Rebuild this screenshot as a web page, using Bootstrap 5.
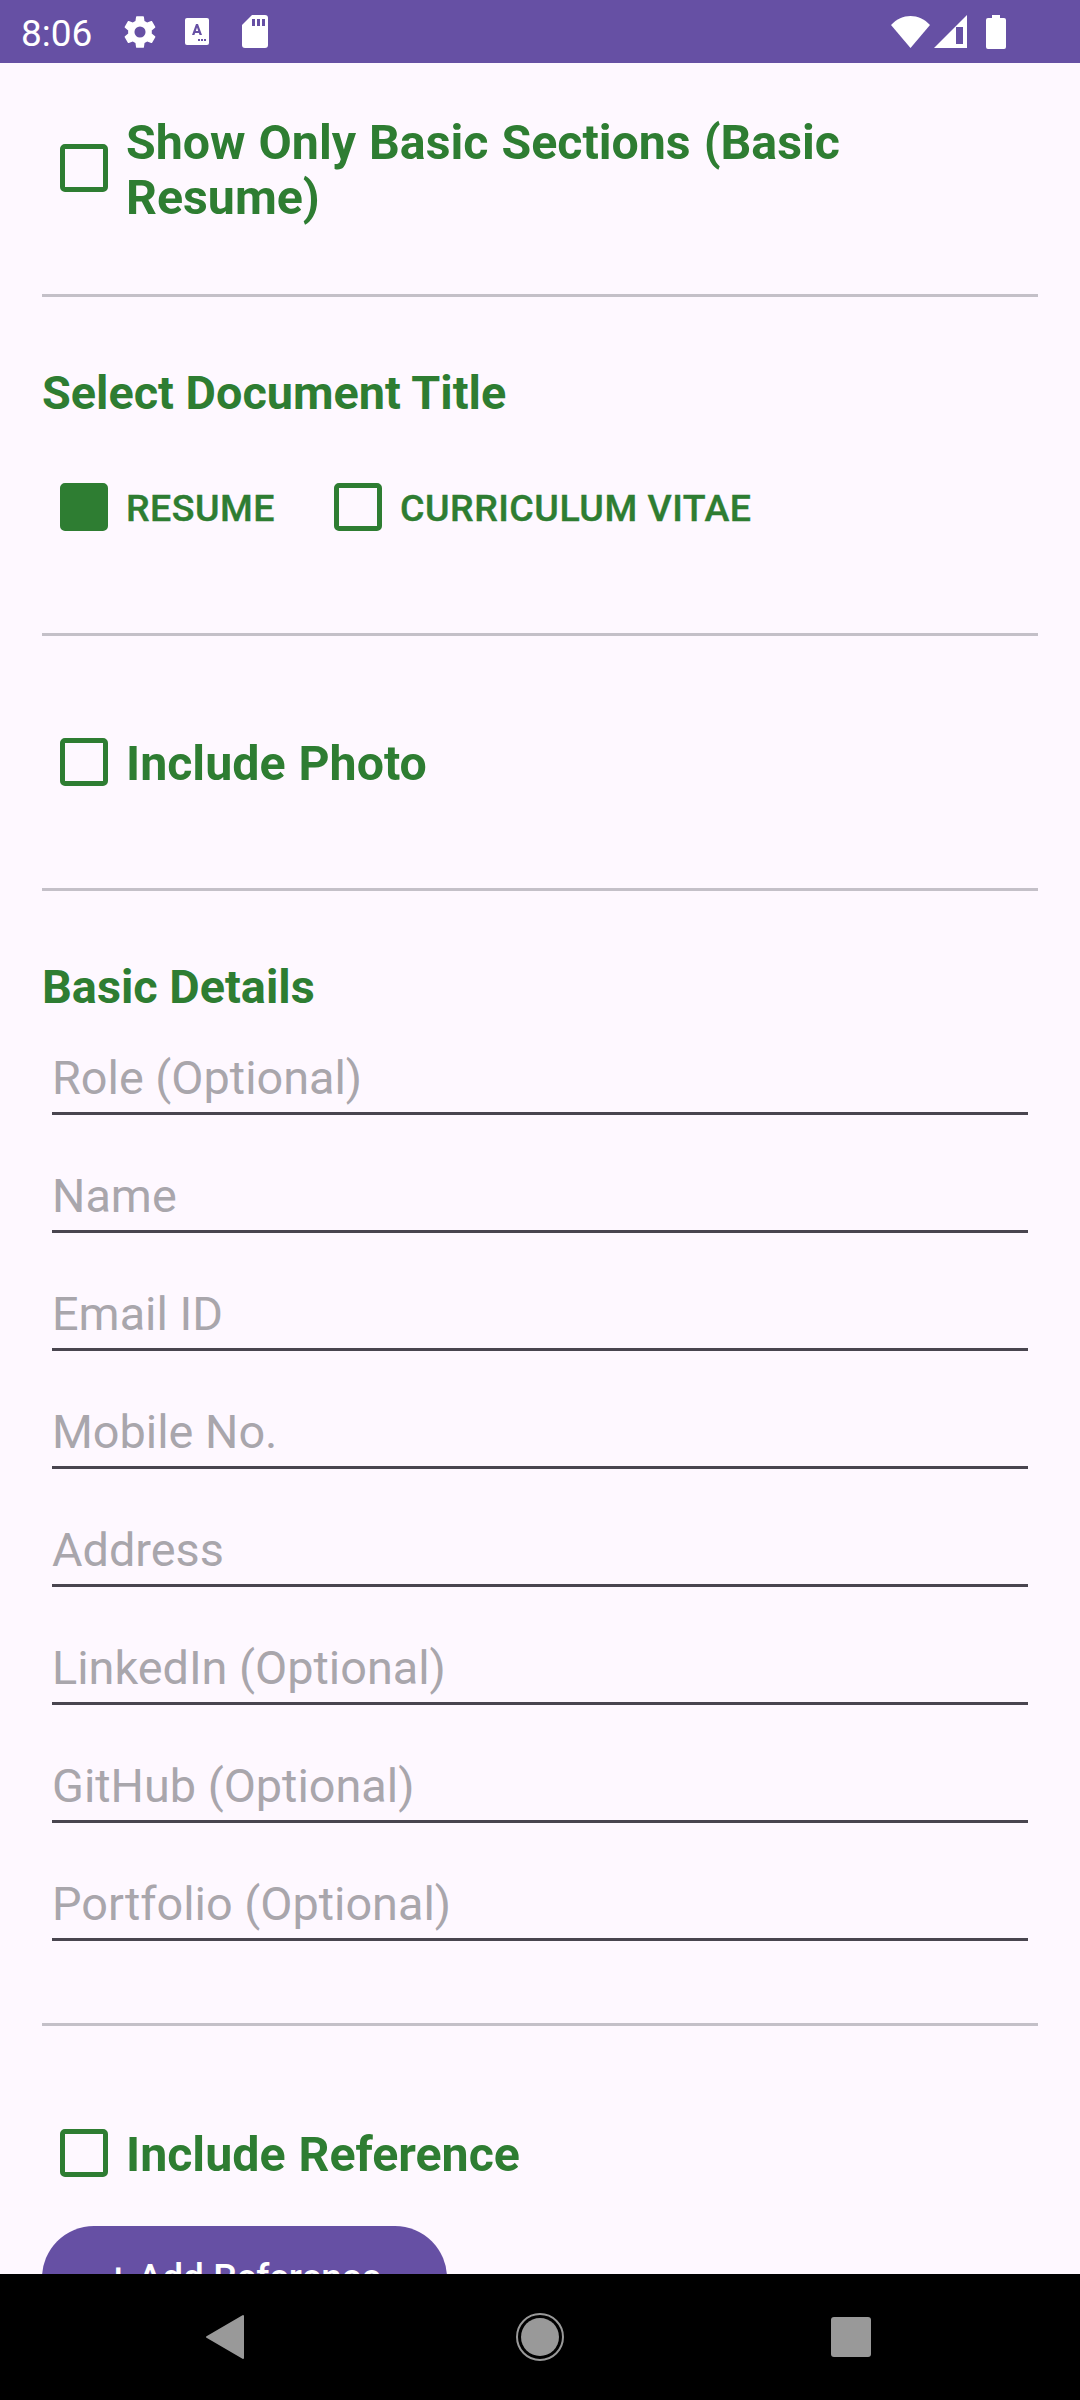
<!DOCTYPE html>
<html lang="en">
<head>
    <meta charset="UTF-8">
    <meta name="viewport" content="width=device-width, initial-scale=1.0">
    <title>Resume Builder</title>
    <link href="https://cdn.jsdelivr.net/npm/bootstrap@5.3.0/dist/css/bootstrap.min.css" rel="stylesheet">
    <style>
        html, body {
            height: 2400px;
            overflow: hidden;
        }
        body {
            font-family: 'Roboto', sans-serif;
            background-color: #fef8ff;
            color: #2e7d32;
        }
        .status-bar {
            height: 63px;
            background-color: #6650a4;
            padding: 0 74px 0 21px;
            color: #fff;
        }
        .status-time {
            font-size: 37px;
            line-height: 1;
            width: 103px;
            margin-top: 4px;
        }
        .sheet {
            height: 2211px;
            overflow: hidden;
            padding: 50px 42px 0;
        }
        .rule {
            height: 3px;
            margin: 0;
            border: 0;
            opacity: 1;
            background-color: #c4c0c8;
        }
        .pick {
            display: flex;
            align-items: center;
            margin: 0;
            padding: 0;
            min-height: 48px;
            font-weight: 700;
            line-height: 48px;
        }
        .pick .form-check-input {
            float: none;
            flex: none;
            width: 48px;
            height: 48px;
            margin: 0 18px 0 18px;
            background-color: transparent;
            border: 5px solid #2e7d32;
            border-radius: 5px;
            box-shadow: none;
        }
        .pick .form-check-input:checked {
            background-color: #2e7d32;
            background-image: none;
        }
        .pick-big {
            font-size: 48.3px;
            word-spacing: 1px;
            padding-right: 40px;
        }
        .pick-big span {
            position: relative;
            top: 2px;
        }
        .pick-wrap {
            line-height: 55px;
        }
        .pick-small {
            font-size: 37.5px;
            font-weight: 500;
            letter-spacing: 0.5px;
            -webkit-text-stroke: 0.4px #2e7d32;
        }
        .pick-small span {
            position: relative;
            top: 1px;
        }
        .section-head {
            font-size: 46.8px;
            font-weight: 700;
            line-height: 55px;
            margin: 0;
        }
        .field-list {
            padding: 0 10px;
        }
        .field-input {
            display: block;
            height: 70px;
            padding: 0;
            margin-top: 48px;
            background: transparent;
            border: 0;
            border-bottom: 3px solid #49454f;
            border-radius: 0;
            font-size: 46.8px;
            box-shadow: none;
        }
        .field-input::placeholder {
            color: #a9a6ac;
            opacity: 1;
        }
        .add-btn {
            width: 405px;
            height: 104px;
            border: 0;
            border-radius: 52px;
            background-color: #6650a4;
            color: #fff;
            font-size: 37px;
            font-weight: 500;
            padding: 0;
        }
        .nav-bar {
            height: 126px;
            background-color: #000;
        }
        .mt-head { margin-top: 69px; }
        .mt-row { margin-top: 62px; }
        .mt-first { margin-top: 30px; }
        .gap-title { gap: 41px; }
        .pad-71 { margin-top: 71px; }
        .pad-102 { margin-top: 102px; }
        .pad-103 { margin-top: 103px; }
        .pad-82 { margin-top: 82px; }
        .pad-49 { margin-top: 49px; }
    </style>
</head>
<body>

    <!-- Android status bar -->
    <div class="status-bar d-flex align-items-center">
        <span class="status-time">8:06</span>
        <svg width="38" height="38" viewBox="0 0 24 24" fill="#fff" class="flex-none" style="margin:0 14px 0 -3px"><path d="M19.4 13c.04-.33.06-.66.06-1s-.02-.67-.06-1l2.1-1.65c.2-.15.25-.42.12-.64l-2-3.46c-.12-.22-.39-.3-.61-.22l-2.49 1c-.52-.4-1.08-.73-1.69-.98l-.38-2.65A.49.49 0 0 0 14 2h-4c-.25 0-.46.18-.49.42l-.38 2.65c-.61.25-1.17.59-1.69.98l-2.49-1c-.23-.09-.49 0-.61.22l-2 3.46c-.13.22-.07.49.12.64L4.56 11c-.04.33-.06.67-.06 1s.02.67.06 1l-2.1 1.65c-.19.15-.25.42-.12.64l2 3.46c.12.22.39.3.61.22l2.49-1c.52.4 1.08.73 1.69.98l.38 2.65c.03.24.24.42.49.42h4c.25 0 .46-.18.49-.42l.38-2.65c.61-.25 1.17-.59 1.69-.98l2.49 1c.23.09.49 0 .61-.22l2-3.46c.12-.22.07-.49-.12-.64L19.4 13zM12 15.5a3.5 3.5 0 1 1 0-7 3.5 3.5 0 0 1 0 7z"/></svg>
        <svg width="24" height="27" viewBox="0 0 24 27" class="flex-none" style="margin:0 33px 0 12px"><rect width="24" height="27" rx="2" fill="#fff"/><path d="M7 17 L11 6 H13 L17 17 H14.6 L13.9 15 H10.1 L9.4 17 Z M10.8 13 H13.2 L12 9.4 Z" fill="#6650a4"/><rect x="13" y="21" width="2" height="2" fill="#6650a4"/><rect x="16" y="21" width="2" height="2" fill="#6650a4"/><rect x="19" y="21" width="2" height="2" fill="#6650a4"/></svg>
        <svg width="26" height="33" viewBox="0 0 26 33" class="flex-none"><path d="M10 0 H23 a3 3 0 0 1 3 3 V30 a3 3 0 0 1 -3 3 H3 a3 3 0 0 1 -3 -3 V10 Z" fill="#fff"/><rect x="10" y="4" width="3" height="7" fill="#6650a4"/><rect x="15" y="4" width="3" height="7" fill="#6650a4"/><rect x="20" y="4" width="3" height="7" fill="#6650a4"/></svg>
        <div class="ms-auto d-flex align-items-center">
            <svg width="39" height="32" viewBox="0 0 39 32" class="flex-none"><path d="M0 9 C11 -3 28 -3 39 9 L19.5 32 Z" fill="#fff"/></svg>
            <svg width="33" height="33" viewBox="0 0 33 33" class="ms-1 flex-none"><path d="M33 0 V33 H0 Z" fill="#fff"/><rect x="22" y="12" width="7" height="17" fill="#6650a4"/></svg>
            <svg width="20" height="34" viewBox="0 0 20 34" class="flex-none" style="margin-left:19px"><path d="M6 0 H14 V3 H18 a2 2 0 0 1 2 2 V32 a2 2 0 0 1 -2 2 H2 a2 2 0 0 1 -2 -2 V5 a2 2 0 0 1 2 -2 H6 Z" fill="#fff"/></svg>
        </div>
    </div>

    <div class="sheet">
        <label class="form-check pick pick-big pick-wrap">
            <input class="form-check-input" type="checkbox">
            <span>Show Only Basic Sections (Basic Resume)</span>
        </label>
        <hr class="rule pad-71">

        <h2 class="section-head mt-head">Select Document Title</h2>
        <div class="d-flex gap-title mt-row">
            <label class="form-check pick pick-small">
                <input class="form-check-input" type="radio" name="doc-title" checked>
                <span>RESUME</span>
            </label>
            <label class="form-check pick pick-small">
                <input class="form-check-input" type="radio" name="doc-title">
                <span>CURRICULUM VITAE</span>
            </label>
        </div>
        <hr class="rule pad-102">

        <label class="form-check pick pick-big pad-102">
            <input class="form-check-input" type="checkbox">
            <span>Include Photo</span>
        </label>
        <hr class="rule pad-102">

        <h2 class="section-head mt-head">Basic Details</h2>
        <div class="field-list mt-first">
            <input class="form-control field-input mt-0" type="text" placeholder="Role (Optional)">
            <input class="form-control field-input" type="text" placeholder="Name">
            <input class="form-control field-input" type="text" placeholder="Email ID">
            <input class="form-control field-input" type="text" placeholder="Mobile No.">
            <input class="form-control field-input" type="text" placeholder="Address">
            <input class="form-control field-input" type="text" placeholder="LinkedIn (Optional)">
            <input class="form-control field-input" type="text" placeholder="GitHub (Optional)">
            <input class="form-control field-input" type="text" placeholder="Portfolio (Optional)">
        </div>
        <hr class="rule pad-82">

        <label class="form-check pick pick-big pad-103">
            <input class="form-check-input" type="checkbox">
            <span>Include Reference</span>
        </label>
        <button class="btn add-btn d-block pad-49" type="button">+ Add Reference</button>
    </div>

    <!-- Android navigation bar -->
    <div class="nav-bar d-flex align-items-center position-relative">
        <svg width="1080" height="126" viewBox="0 0 1080 126">
            <path d="M243 42 V84 L207 63 Z" fill="#999" stroke="#999" stroke-width="2" stroke-linejoin="round"/>
            <circle cx="540" cy="63" r="23" fill="none" stroke="#999" stroke-width="2"/>
            <circle cx="540" cy="63" r="19" fill="#999"/>
            <rect x="831" y="43" width="40" height="40" rx="3" fill="#999"/>
        </svg>
    </div>

    <script src="https://cdn.jsdelivr.net/npm/bootstrap@5.3.0/dist/js/bootstrap.bundle.min.js"></script>
</body>
</html>
